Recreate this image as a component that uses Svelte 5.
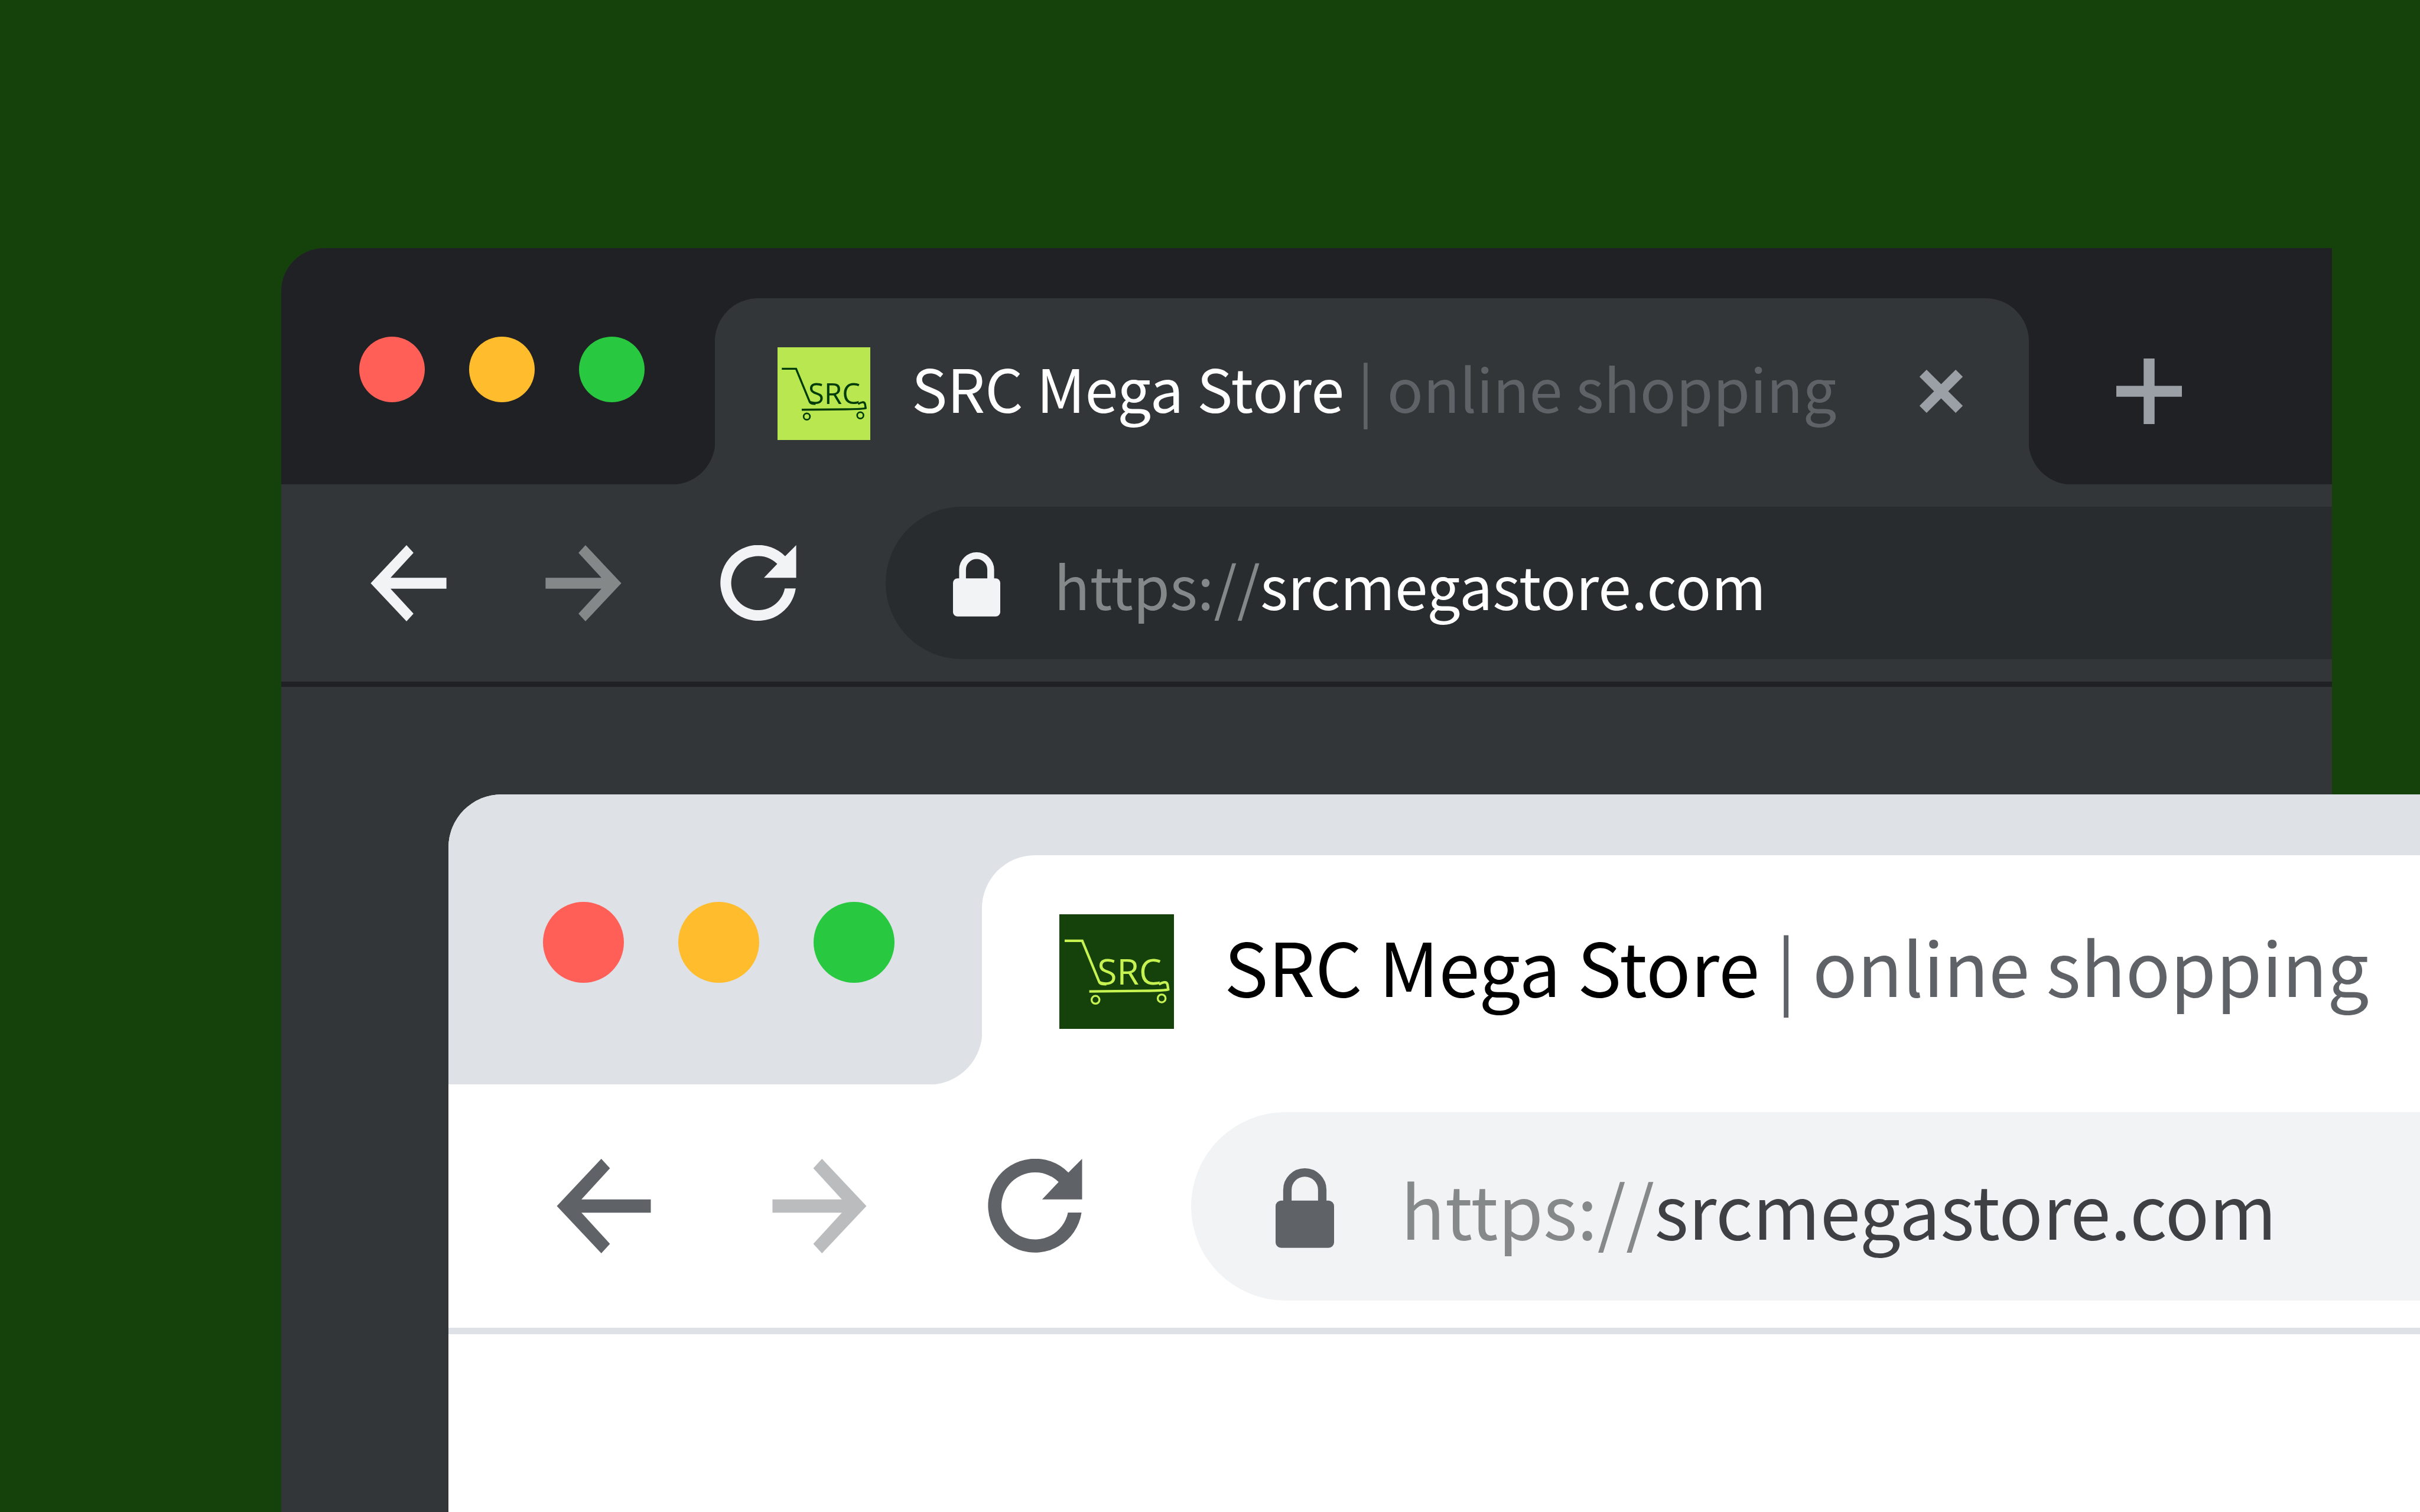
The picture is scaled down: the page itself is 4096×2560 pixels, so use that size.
<script>
  const windows = [
    { theme: 'dark', closable: true },
    { theme: 'light', closable: false }
  ];
  const name = 'SRC Mega Store';
  const tagline = 'online shopping';
</script>

<svelte:head><title>SRC Mega Store | online shopping</title></svelte:head>

<main class="desktop">
  {#each windows as { theme, closable } (theme)}
    <section class="window {theme}" aria-label="{name}, {theme} theme">
      <header class="strip">
        <div class="lights">
          <button class="lamp red" aria-label="Close window"></button>
          <button class="lamp amber" aria-label="Minimise window"></button>
          <button class="lamp green" aria-label="Zoom window"></button>
        </div>

        <div class="tab" class:closable>
          <svg class="favicon" viewBox="0 0 205 205" role="img" aria-label="SRC cart logo">
            <rect class="favicon-bg" width="205" height="205" />
            <path d="M9.500 47.500H41L71.500 121.500Q73.500 125.500 84 125" />
            <path d="M178 125.500C184 122 192 118.500 193.500 126L194.800 134.500Q190 136.600 150 137L53.500 138" />
            <circle cx="64.700" cy="153" r="7" />
            <circle cx="183" cy="150.500" r="7" />
            <text x="68" y="126">SRC</text>
          </svg>
          <h1 class="title">{name} <span class="tagline">| {tagline}</span></h1>
          {#if closable}
            <button class="close" aria-label="Close tab">
              <svg viewBox="0 0 95 95"><path d="M7.700 7.700 87.300 87.300M87.300 7.700 7.700 87.300" /></svg>
            </button>
          {/if}
        </div>

        {#if closable}
          <button class="new-tab" aria-label="New tab">
            <svg viewBox="0 0 144 144"><path d="M0 72H144M72 0V144" /></svg>
          </button>
        {/if}
      </header>

      <nav class="toolbar" aria-label="Navigation">
        <div class="nav-buttons">
          <button class="nav" aria-label="Back">
            <svg viewBox="0 0 168 169"><path d="M0 84.500 79.500 0 95 17 44 72.500H168V96.500H44L95 152 79.500 169Z" /></svg>
          </button>
          <button class="nav" aria-label="Forward" disabled>
            <svg viewBox="0 0 168 169"><path d="M168 84.500 88.500 0 73 17 124 72.500H0V96.500H124L73 152 88.500 169Z" /></svg>
          </button>
          <button class="nav" aria-label="Reload">
            <svg viewBox="0 0 168 169"><path d="M167 96A84 84 0 1 1 143.500 24.500L168 0V72.500H96.500L126 41.500A60 60 0 1 0 142.700 96Z" /></svg>
          </button>
        </div>
        <label class="address">
          <svg class="lock" viewBox="0 0 104 142" aria-hidden="true">
            <path d="M21 62V38.500a31 31 0 0 1 62 0V62" />
            <rect y="57.500" width="104" height="84" rx="10" />
          </svg>
          <span class="scheme">https://</span>
          <input class="host" type="text" value="srcmegastore.com" aria-label="Address" spellcheck="false" />
        </label>
      </nav>
    </section>
  {/each}
</main>

<style>
  :global(body) {
    margin: 0;
    background: #15410b;
  }

  .desktop {
    position: relative;
    min-height: 100vh;
    overflow: hidden;
    background: #15410b;
    font-family: 'Noto Sans CJK SC', 'Open Sans', sans-serif;
  }

  .window {
    position: absolute;
    bottom: 0;
    box-sizing: border-box;
    overflow: hidden;
    border-top-left-radius: var(--radius);
    background: var(--surface);
  }

  .dark {
    --radius: 73px;
    --strip: #202124;
    --surface: #323639;
    --field: #282c2f;
    --rule: #202124;
    --icon: #f1f3f4;
    --icon-off: #848888;
    --name: #ffffff;
    --tagline: #5f6368;
    --scheme: #848888;
    --host: #ffffff;
    --logo-bg: #b9e74f;
    --logo: #003c0a;

    --strip-height: 400px;
    --tab-top: 85px;
    --lights-width: 734px;
    --lights-left: 132px;
    --lights-top: 150px;
    --lamp: 111px;
    --lamp-gap: 75px;
    --tab-pad: 106px;
    --favicon: 157px;
    --favicon-drop: 7px;
    --title-gap: 70px;
    --title: 101px;
    --title-rise: 14px;
    --bar-height: 334px;
    --bar-left: 151px;
    --nav: 129px;
    --nav-gap: 167px;
    --field-gap: 151px;
    --field-height: 258px;
    --field-pad: 114px;
    --lock: 80px;
    --lock-gap: 91px;
    --field-drop: 6px;
    --url: 100px;
    --rule-width: 9px;

    top: 420px;
    left: 476px;
    right: 149px;
  }

  .light {
    --radius: 90px;
    --strip: #dee1e6;
    --surface: #ffffff;
    --field: #f1f3f5;
    --rule: #dee1e6;
    --icon: #5f6368;
    --icon-off: #babcbe;
    --name: #000000;
    --tagline: #5f6368;
    --scheme: #858989;
    --host: #3f4043;
    --logo-bg: #15410b;
    --logo: #c6f352;

    --strip-height: 491px;
    --tab-top: 103px;
    --lights-width: 903px;
    --lights-left: 160px;
    --lights-top: 182px;
    --lamp: 137px;
    --lamp-gap: 92px;
    --tab-pad: 131px;
    --favicon: 194px;
    --favicon-drop: 6px;
    --title-gap: 85px;
    --title: 125px;
    --title-rise: 18px;
    --bar-height: 412px;
    --bar-left: 183px;
    --nav: 160px;
    --nav-gap: 205px;
    --field-gap: 184px;
    --field-height: 319px;
    --field-pad: 143px;
    --lock: 99px;
    --lock-gap: 113px;
    --field-drop: 7px;
    --url: 123px;
    --rule-width: 11px;

    top: 1345px;
    left: 759px;
    right: 0;
  }

  button {
    flex: none;
    margin: 0;
    padding: 0;
    border: 0;
    background: none;
    color: inherit;
  }

  svg {
    display: block;
    flex: none;
  }

  .strip {
    display: flex;
    height: var(--strip-height);
    background: var(--strip);
  }

  .lights {
    display: flex;
    flex: none;
    align-items: flex-start;
    gap: var(--lamp-gap);
    box-sizing: border-box;
    width: var(--lights-width);
    padding: var(--lights-top) 0 0 var(--lights-left);
  }

  .lamp {
    width: var(--lamp);
    height: var(--lamp);
    border-radius: 50%;
  }

  .red {
    background: #ff5f57;
  }

  .amber {
    background: #ffbd2e;
  }

  .green {
    background: #28c940;
  }

  .tab {
    position: relative;
    display: flex;
    flex: 1 1 0;
    align-items: center;
    box-sizing: border-box;
    margin-top: var(--tab-top);
    padding-left: var(--tab-pad);
    border-top-left-radius: var(--radius);
    background: var(--surface);
  }

  .tab.closable {
    flex: none;
    width: 2224px;
    padding-right: 112px;
    border-top-right-radius: var(--radius);
  }

  /* Concave feet that blend the tab into the toolbar. */
  .tab::before,
  .tab.closable::after {
    content: '';
    position: absolute;
    bottom: 0;
    width: var(--radius);
    height: var(--radius);
  }

  .tab::before {
    right: 100%;
    background: radial-gradient(circle at 0 0, transparent var(--radius), var(--surface) calc(var(--radius) + 1px));
  }

  .tab.closable::after {
    left: 100%;
    background: radial-gradient(circle at 100% 0, transparent var(--radius), var(--surface) calc(var(--radius) + 1px));
  }

  .favicon {
    width: var(--favicon);
    height: var(--favicon);
    margin-top: var(--favicon-drop);
    fill: none;
    stroke: var(--logo);
    stroke-width: 4.500;
  }

  .favicon-bg {
    fill: var(--logo-bg);
    stroke: none;
  }

  .favicon circle {
    stroke-width: 3.500;
  }

  .favicon text {
    fill: var(--logo);
    stroke: none;
    font: 64px 'Open Sans', sans-serif;
  }

  .title {
    margin: 0 0 0 var(--title-gap);
    padding-bottom: var(--title-rise);
    color: var(--name);
    font-size: var(--title);
    font-weight: 400;
    line-height: 1;
    white-space: nowrap;
  }

  .tagline {
    color: var(--tagline);
  }

  .close {
    margin-left: auto;
  }

  .close svg {
    width: 73px;
    height: 73px;
    stroke: #9ba0a7;
    stroke-width: 22;
  }

  .new-tab {
    margin: var(--tab-top) 0 0 148px;
  }

  .new-tab svg {
    width: 111px;
    height: 111px;
    stroke: #9ba0a7;
    stroke-width: 24;
  }

  .toolbar {
    display: flex;
    align-items: center;
    gap: var(--field-gap);
    height: var(--bar-height);
    padding-left: var(--bar-left);
    border-bottom: var(--rule-width) solid var(--rule);
  }

  .nav-buttons {
    display: flex;
    flex: none;
    gap: var(--nav-gap);
  }

  .nav svg {
    width: var(--nav);
    height: var(--nav);
    fill: var(--icon);
  }

  .nav:disabled svg {
    fill: var(--icon-off);
  }

  .address {
    display: flex;
    flex: 1;
    align-items: center;
    box-sizing: border-box;
    min-width: 0;
    height: var(--field-height);
    padding: var(--field-drop) 0 0 var(--field-pad);
    border-radius: var(--field-height) 0 0 var(--field-height);
    background: var(--field);
    font-size: var(--url);
    line-height: 1.5;
  }

  .lock {
    width: var(--lock);
    margin-right: var(--lock-gap);
    fill: var(--icon);
  }

  .lock path {
    fill: none;
    stroke: var(--icon);
    stroke-width: 15;
  }

  .scheme {
    color: var(--scheme);
  }

  .host {
    flex: 1;
    min-width: 0;
    margin: 0;
    padding: 0;
    border: 0;
    outline: 0;
    background: none;
    color: var(--host);
    font: inherit;
  }
</style>
